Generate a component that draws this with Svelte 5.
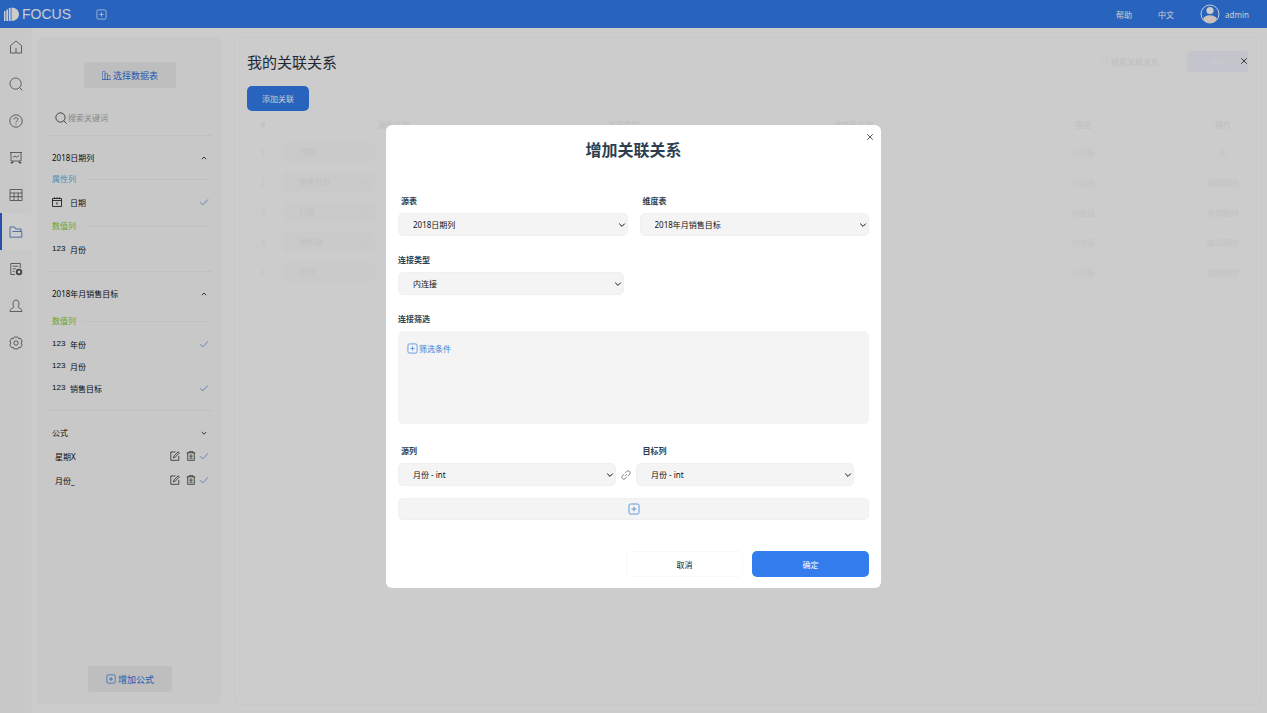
<script lang="ts">
  type Item = { name: string; kind: 'date' | 'num'; checked: boolean };
  type Group = { label: string; tone: 'attr' | 'value'; items: Item[] };

  const rail = ['home', 'search', 'help', 'board', 'table', 'folder', 'report', 'user', 'gear'];

  const tables: { name: string; roomy: boolean; groups: Group[] }[] = [
    {
      name: '2018日期列',
      roomy: false,
      groups: [
        { label: '属性列', tone: 'attr', items: [{ name: '日期', kind: 'date', checked: true }] },
        { label: '数值列', tone: 'value', items: [{ name: '月份', kind: 'num', checked: false }] },
      ],
    },
    {
      name: '2018年月销售目标',
      roomy: true,
      groups: [
        {
          label: '数值列',
          tone: 'value',
          items: [
            { name: '年份', kind: 'num', checked: true },
            { name: '月份', kind: 'num', checked: false },
            { name: '销售目标', kind: 'num', checked: true },
          ],
        },
      ],
    },
  ];

  const formulas = ['星期X', '月份_'];

  const relations = [
    { source: '日期', type: '内连接', action: '无' },
    { source: '销售目标', type: '内连接', action: '编辑删除' },
    { source: '日期', type: '内连接', action: '编辑删除' },
    { source: '源数据', type: '内连接', action: '编辑删除' },
    { source: '月份_', type: '内连接', action: '编辑删除' },
  ];

  let sourceTable = $state('2018日期列');
  let dimTable = $state('2018年月销售目标');
  let joinType = $state('内连接');
  let sourceCol = $state('月份 - int');
  let targetCol = $state('月份 - int');
</script>

{#snippet plusBox(size: number)}
  <svg width={size} height={size} viewBox="0 0 12 12" class="line">
    <rect x="1" y="1" width="10" height="10" rx="1.5" />
    <path d="M6 3.6v4.8M3.6 6h4.8" />
  </svg>
{/snippet}

{#snippet magnifier(size: number)}
  <svg width={size} height={size} viewBox="0 0 14 14" class="line">
    <circle cx="6.4" cy="6.4" r="5.4" />
    <path d="M10.4 10.4l3 3" />
  </svg>
{/snippet}

{#snippet check()}
  <svg width="10" height="10" viewBox="0 0 10 10" class="line check"><path d="M1 5.2l2.7 2.7L9 2.4" /></svg>
{/snippet}

{#snippet cross()}
  <svg width="8" height="8" viewBox="0 0 8 8" class="line"><path d="M1.2 1.2l5.6 5.6M6.8 1.2L1.2 6.8" /></svg>
{/snippet}

{#snippet railIcon(name: string)}
  <svg width="14" height="14" viewBox="0 0 14 14" class="line">
    {#if name === 'home'}
      <path d="M1.5 5.6L7 1l5.500 4.600V13h-11zM7 8v5" />
    {:else if name === 'search'}
      <circle cx="6.6" cy="6.6" r="5.600" /><path d="M10.700 10.700l2.600 2.600" />
    {:else if name === 'help'}
      <circle cx="7" cy="7" r="6.200" />
      <path d="M5 5.500C5 4.200 5.900 3.500 7 3.500s2 .8 2 1.900c0 1.400-2 1.600-2 3.100M7 9.800v1" />
    {:else if name === 'board'}
      <path d="M1 1.500h12M2 1.500v8.500h10V1.500M4 10l-1.500 3M10 10l1.500 3M1.500 11.500h3M9.500 11.500h3M4 6.500l2-1.500 1.500 1.200L10 4.500" />
    {:else if name === 'table'}
      <path d="M1 1.500h12v11H1zM1 5h12M1 8.700h12M5 5v7.500M9.200 5v7.500" />
    {:else if name === 'folder'}
      <path d="M1 12.200V2h4.500l1.200 2h5.300v2.200M1 12.200h11.800V6.500H3.500" />
    {:else if name === 'report'}
      <path d="M6 12.500H1.800v-11h9.500V6M3.800 4.200h5.500M3.800 6.800h3M3.800 9.400h1.800" />
      <circle cx="10" cy="10" r="2.300" class="thick" />
    {:else if name === 'user'}
      <path d="M5 8C3.500 6.500 3.500 1 7 1s3.500 5.500 2 7c.4 1.200 3.800 1 4 4.500H1C1.200 9 4.600 9.200 5 8z" />
    {:else}
      <path d="M5.300 1h3.400l.8 1.500 2-.1 1.600 2.800L12.200 7l.9 1.800-1.600 2.800-2-.1-.8 1.500H5.300l-.8-1.500-2 .1L.9 8.800 1.800 7 .9 5.200l1.600-2.800 2 .1z" />
      <circle cx="7" cy="7" r="2.200" />
    {/if}
  </svg>
{/snippet}

{#snippet dropdown(id: string, value: string, set: (v: string) => void)}
  <div class="select">
    <select {id} {value} onchange={(e) => set(e.currentTarget.value)}>
      <option>{value}</option>
    </select>
    <svg width="8" height="8" viewBox="0 0 8 8" class="line"><path d="M1.200 2.600L4 5.400l2.800-2.800" /></svg>
  </div>
{/snippet}

<div class="app">
  <header>
    <a class="brand" href="#home">
      <svg width="15" height="15" viewBox="0 0 15 15" fill="currentColor">
        <path d="M0 4h1.500v10H0zM2.300 2.500h1.700V14H2.300zM4.800 1h1.900v13H4.800zM7.500 .5C12 .5 15 3.600 15 7.300S12 14 7.500 14z" />
      </svg>
      FOCUS
    </a>
    <button class="bare new-tab" aria-label="新建">{@render plusBox(11)}</button>
    <nav class="top-links">
      <a href="#help">帮助</a>
      <a href="#lang">中文</a>
      <a class="account" href="#me">
        <svg width="20" height="20" viewBox="0 0 20 20">
          <circle cx="10" cy="10" r="9" fill="none" stroke="currentColor" />
          <circle cx="10" cy="6.500" r="3.600" fill="currentColor" />
          <path d="M3 15.300c1-3 3.500-4 7-4s6 1 7 4a8.500 8.500 0 0 1-14 0z" fill="#fff0e6" />
        </svg>
        admin
      </a>
    </nav>
  </header>

  <div class="body">
    <nav class="rail">
      {#each rail as name}
        <a href="#{name}" class:active={name === 'folder'} aria-label={name}>{@render railIcon(name)}</a>
      {/each}
    </nav>

    <aside>
      <button class="gray pick">
        <svg width="9" height="9" viewBox="0 0 9 9" class="line thin">
          <path d="M.5 8.500v-8h2.500v8zM3 8.500v-6h2.500v6zM5.500 8.500v-4H8v4zM0 8.500h9" />
        </svg>
        选择数据表
      </button>
      <label class="search">
        {@render magnifier(12)}
        <input type="text" placeholder="搜索关键词" aria-label="搜索关键词" />
      </label>

      {#each tables as table}
        <section class:roomy={table.roomy}>
          <h3>
            {table.name}
            <svg width="6" height="6" viewBox="0 0 6 6" class="line"><path d="M.8 4.200L3 2l2.200 2.200" /></svg>
          </h3>
          {#each table.groups as group}
            <div class="group {group.tone}">{group.label}</div>
            <ul>
              {#each group.items as item}
                <li>
                  <span class="kind">
                    {#if item.kind === 'date'}
                      <svg width="10" height="10" viewBox="0 0 10 10" class="line">
                        <path d="M.5 1.500h9v8h-9zM.5 3.500h9M2.500 .2v1.600M5 .2v1.600M7.500 .2v1.600M5 5.200v2.600" />
                      </svg>
                    {:else}
                      123
                    {/if}
                  </span>
                  <span class="name">{item.name}</span>
                  {#if item.checked}{@render check()}{/if}
                </li>
              {/each}
            </ul>
          {/each}
        </section>
      {/each}

      <section class="formulas">
        <h3>
          公式
          <svg width="6" height="6" viewBox="0 0 6 6" class="line"><path d="M.8 2L3 4.200 5.200 2" /></svg>
        </h3>
        <ul>
          {#each formulas as formula}
            <li>
              <span class="name">{formula}</span>
              <button class="bare" aria-label="编辑">
                <svg width="10" height="10" viewBox="0 0 10 10" class="line">
                  <path d="M5.500 1H.8v8.300h8V5M3.500 6.800l.4-1.700L8.200.8l1.200 1.200-4.300 4.300z" />
                </svg>
              </button>
              <button class="bare" aria-label="删除">
                <svg width="10" height="10" viewBox="0 0 10 10" class="line">
                  <path d="M.8 1.800h8.400M3 1.800V.7h4v1.100M1.700 1.800v7.500h6.600V1.800M3.500 4.200h3M3.500 5.700h3M3.500 7.200h3" />
                </svg>
              </button>
              {@render check()}
            </li>
          {/each}
        </ul>
      </section>

      <button class="gray add-formula">{@render plusBox(10)}增加公式</button>
    </aside>

    <main>
      <div class="title-row">
        <h1>我的关联关系</h1>
        <label class="filter">
          {@render magnifier(8)}
          <input type="text" placeholder="搜索关联关系" aria-label="搜索关联关系" />
        </label>
        <button class="ghost">搜索</button>
        <button class="bare close-page" aria-label="关闭">{@render cross()}</button>
      </div>
      <button class="primary add-relation">添加关联</button>
      <table>
        <thead>
          <tr>
            <th class="idx">#</th>
            <th>源表名称</th>
            <th>连接类型</th>
            <th>维度表名称</th>
            <th>描述</th>
            <th class="act">操作</th>
          </tr>
        </thead>
        <tbody>
          {#each relations as row, i}
            <tr>
              <td>{i + 1}</td>
              <td>
                <span class="chip">
                  {row.source}
                  <svg width="6" height="6" viewBox="0 0 6 6" class="line"><path d="M.8 2L3 4.200 5.200 2" /></svg>
                </span>
              </td>
              <td></td>
              <td></td>
              <td>{row.type}</td>
              <td>{row.action}</td>
            </tr>
          {/each}
        </tbody>
      </table>
    </main>
  </div>
</div>

<div class="overlay">
  <div class="modal" role="dialog" aria-modal="true" aria-labelledby="modal-title">
    <button class="bare close" aria-label="关闭">{@render cross()}</button>
    <h2 id="modal-title">增加关联关系</h2>

    <div class="pair">
      <div class="field">
        <label class="inset" for="source-table">源表</label>
        {@render dropdown('source-table', sourceTable, (v) => (sourceTable = v))}
      </div>
      <div class="field">
        <label class="inset" for="dim-table">维度表</label>
        {@render dropdown('dim-table', dimTable, (v) => (dimTable = v))}
      </div>
    </div>

    <div class="field join">
      <label for="join-type">连接类型</label>
      {@render dropdown('join-type', joinType, (v) => (joinType = v))}
    </div>

    <div class="field">
      <span class="caption">连接筛选</span>
      <div class="filters">
        <button class="bare add-filter">{@render plusBox(11)}筛选条件</button>
      </div>
    </div>

    <div class="pair captions">
      <label class="inset" for="source-col">源列</label>
      <label class="inset" for="target-col">目标列</label>
    </div>
    <div class="columns">
      {@render dropdown('source-col', sourceCol, (v) => (sourceCol = v))}
      <svg width="10" height="10" viewBox="0 0 10 10" class="line link">
        <path d="M4 3.200L5.800 1.400a1.900 1.900 0 0 1 2.800 2.800L6.800 6M6 6.800L4.200 8.600a1.900 1.900 0 0 1-2.800-2.800L3.200 4M4.200 5.800l1.600-1.600" />
      </svg>
      {@render dropdown('target-col', targetCol, (v) => (targetCol = v))}
    </div>

    <button class="add-row" aria-label="添加">{@render plusBox(12)}</button>

    <div class="actions">
      <button class="cancel">取消</button>
      <button class="primary">确定</button>
    </div>
  </div>
</div>

<style>
  :global(body) {
    margin: 0;
    font-family: "Noto Sans", "Noto Sans CJK SC", sans-serif;
    font-size: 8px;
    color: #111;
  }

  .app {
    display: flex;
    flex-direction: column;
    min-height: 100vh;
    background: #fff;
  }

  h1, h2, h3, ul { margin: 0; padding: 0; font-weight: 400; }
  ul { list-style: none; }
  a { color: inherit; text-decoration: none; }
  svg { flex-shrink: 0; }
  button, input, select { font: inherit; color: inherit; }
  button { cursor: pointer; }
  input { border: 0; outline: 0; background: none; padding: 0; min-width: 0; }

  .line { fill: none; stroke: currentColor; stroke-width: 0.8; }
  .thin { stroke-width: 0.5; }
  .thick { stroke-width: 1.8; }
  .bare {
    display: flex;
    align-items: center;
    padding: 0;
    border: 0;
    background: none;
  }
  .primary {
    border: 0;
    border-radius: 5px;
    background: #327cee;
    color: #fff;
  }

  /* Top bar */
  header {
    display: flex;
    align-items: center;
    height: 28px;
    padding: 0 18px 0 4px;
    box-sizing: border-box;
    background: #327cee;
    color: #fff;
  }
  .brand {
    display: flex;
    align-items: center;
    gap: 3px;
    font: 14px "Liberation Sans", Arial, sans-serif;
  }
  .new-tab { margin-left: 25px; }
  .top-links {
    display: flex;
    align-items: center;
    gap: 26px;
    margin-left: auto;
  }
  .account { display: flex; align-items: center; gap: 5px; }

  .body { display: flex; flex: 1; }

  /* Icon rail */
  .rail {
    width: 31px;
    background: #fafafa;
    border-right: 1px solid #fdfdfd;
    color: #555;
  }
  .rail a {
    display: flex;
    align-items: center;
    height: 37px;
    padding-left: 9px;
    box-sizing: border-box;
  }
  .rail .active {
    padding-left: 7px;
    border-left: 2px solid #2f66d8;
    background: #fff;
    color: #3d6fc0;
  }

  /* Data panel */
  aside {
    display: flex;
    flex-direction: column;
    width: 184px;
    margin: 9px 13px 9px 5px;
    padding: 25px 9px 12px 11px;
    box-sizing: border-box;
    border-radius: 5px;
    background: #fafafa;
  }
  .gray {
    display: flex;
    align-items: center;
    justify-content: center;
    gap: 2px;
    height: 26px;
    border: 0;
    border-radius: 3px;
    background: #eee;
    color: #2f6fdc;
    font-size: 9px;
  }
  .pick { align-self: center; width: 92px; }
  .add-formula { align-self: center; width: 84px; margin-top: auto; }
  .search {
    display: flex;
    align-items: center;
    gap: 1px;
    height: 35px;
    margin-top: 12px;
    padding-left: 7px;
    border-bottom: 1px solid #f1f1f1;
  }
  .search input::placeholder { color: #aaa; }

  section {
    padding: 14px 3px 11px 4px;
    border-bottom: 1px solid #f1f1f1;
  }
  section.formulas { border: 0; }
  h3 {
    display: flex;
    align-items: center;
    justify-content: space-between;
    padding-right: 2px;
    font-size: 8px;
    line-height: 16px;
  }
  .group {
    display: flex;
    align-items: center;
    gap: 8px;
    margin: 5px 0 4px;
    line-height: 16px;
  }
  .roomy .group { margin-top: 11px; }
  .group::after {
    content: "";
    flex: 1;
    height: 1px;
    background: #f2f2f2;
  }
  .attr { color: #58b6e6; }
  .value { color: #84d03c; }
  li { display: flex; align-items: center; height: 22px; }
  .kind {
    width: 18px;
    font-family: "Liberation Sans", Arial, sans-serif;
    line-height: 10px;
  }
  .kind svg { display: block; }
  .name { flex: 1; }
  .check { color: #5a8fe6; }
  .formulas ul { margin-top: 3px; }
  .formulas li { height: 24px; gap: 6px; padding-left: 3px; }
  .formulas li .bare { color: #333; }
  .formulas .check { margin-left: -3px; }

  /* Relation list */
  main {
    flex: 1;
    min-width: 0;
    margin: 9px 5px 8px 0;
    padding: 10px 13px 10px 12px;
    box-sizing: border-box;
    border: 1px solid #fafafa;
    border-radius: 5px;
    background: #fff;
  }
  .title-row { display: flex; align-items: center; height: 26px; }
  h1 { flex: 1; font-size: 15px; color: #2c3345; }
  .filter {
    display: flex;
    align-items: center;
    gap: 2px;
    width: 86px;
    color: #f3f3f3;
  }
  .filter input { flex: 1; }
  .filter input::placeholder { color: #f0f0f0; }
  .ghost {
    width: 61px;
    height: 21px;
    border: 0;
    border-radius: 4px;
    background: #f4f6ff;
    color: #fbfcff;
  }
  .close-page { margin-left: -8px; color: #222; }
  .add-relation { width: 62px; height: 25px; margin-top: 12px; }

  table {
    width: 100%;
    border-collapse: collapse;
    table-layout: fixed;
    text-align: center;
    color: #f6f6f6;
  }
  th { height: 26px; padding: 0; font-weight: 400; color: #f0f0f0; }
  td { height: 30px; padding: 0; }
  .idx { width: 32px; }
  .act { width: 50px; }
  .chip {
    display: flex;
    align-items: center;
    justify-content: space-between;
    width: 92px;
    margin-left: 4px;
    padding: 0 6px 0 16px;
    box-sizing: border-box;
    border-radius: 4px;
    line-height: 20px;
    background: #fdfdfd;
    color: #f3f3f3;
  }

  /* Dialog */
  .overlay {
    position: fixed;
    inset: 0;
    display: flex;
    align-items: center;
    justify-content: center;
    background: rgba(0, 0, 0, 0.2);
  }
  .modal {
    position: relative;
    width: 495px;
    padding: 11px 12px;
    box-sizing: border-box;
    border-radius: 6px;
    background: #fff;
  }
  .close {
    position: absolute;
    top: 8px;
    right: 7px;
    color: #333;
  }
  h2 {
    margin-bottom: 29px;
    font-size: 16px;
    font-weight: 700;
    line-height: 28px;
    text-align: center;
    color: #2c3e50;
  }
  .pair { display: grid; grid-template-columns: 1fr 1fr; gap: 12px; }
  .field { margin-bottom: 16px; }
  .join { width: 48%; }
  .modal label, .caption {
    display: block;
    margin-bottom: 4px;
    font-weight: 700;
    line-height: 16px;
    color: #2c3e50;
  }
  .modal .inset { padding-left: 3px; }

  .select { position: relative; }
  .select select {
    display: block;
    width: 100%;
    height: 23px;
    padding: 0 20px 0 14px;
    border: 1px solid #f0f0f0;
    border-radius: 5px;
    background: #f4f4f4;
    color: #111;
    appearance: none;
  }
  .select svg {
    position: absolute;
    top: 8px;
    right: 2px;
    stroke-width: 1;
    pointer-events: none;
  }

  .filters {
    min-height: 93px;
    padding: 12px 9px;
    box-sizing: border-box;
    border-radius: 5px;
    background: #f4f4f4;
  }
  .add-filter { gap: 1px; color: #3c7fd6; }
  .captions { margin-top: 19px; }
  .columns {
    display: grid;
    grid-template-columns: 1fr 20px 1fr;
    align-items: center;
    padding-right: 15px;
  }
  .link { justify-self: center; color: #666; }
  .add-row {
    display: flex;
    align-items: center;
    justify-content: center;
    width: 100%;
    height: 22px;
    margin-top: 12px;
    border: 1px solid #f0f0f0;
    border-radius: 5px;
    background: #f4f4f4;
    color: #3c7fd6;
  }
  .actions {
    display: flex;
    justify-content: flex-end;
    gap: 9px;
    margin-top: 31px;
  }
  .actions button { width: 117px; height: 26px; }
  .cancel {
    border: 1px solid #f8f8f8;
    border-radius: 5px;
    background: #fff;
  }
</style>
